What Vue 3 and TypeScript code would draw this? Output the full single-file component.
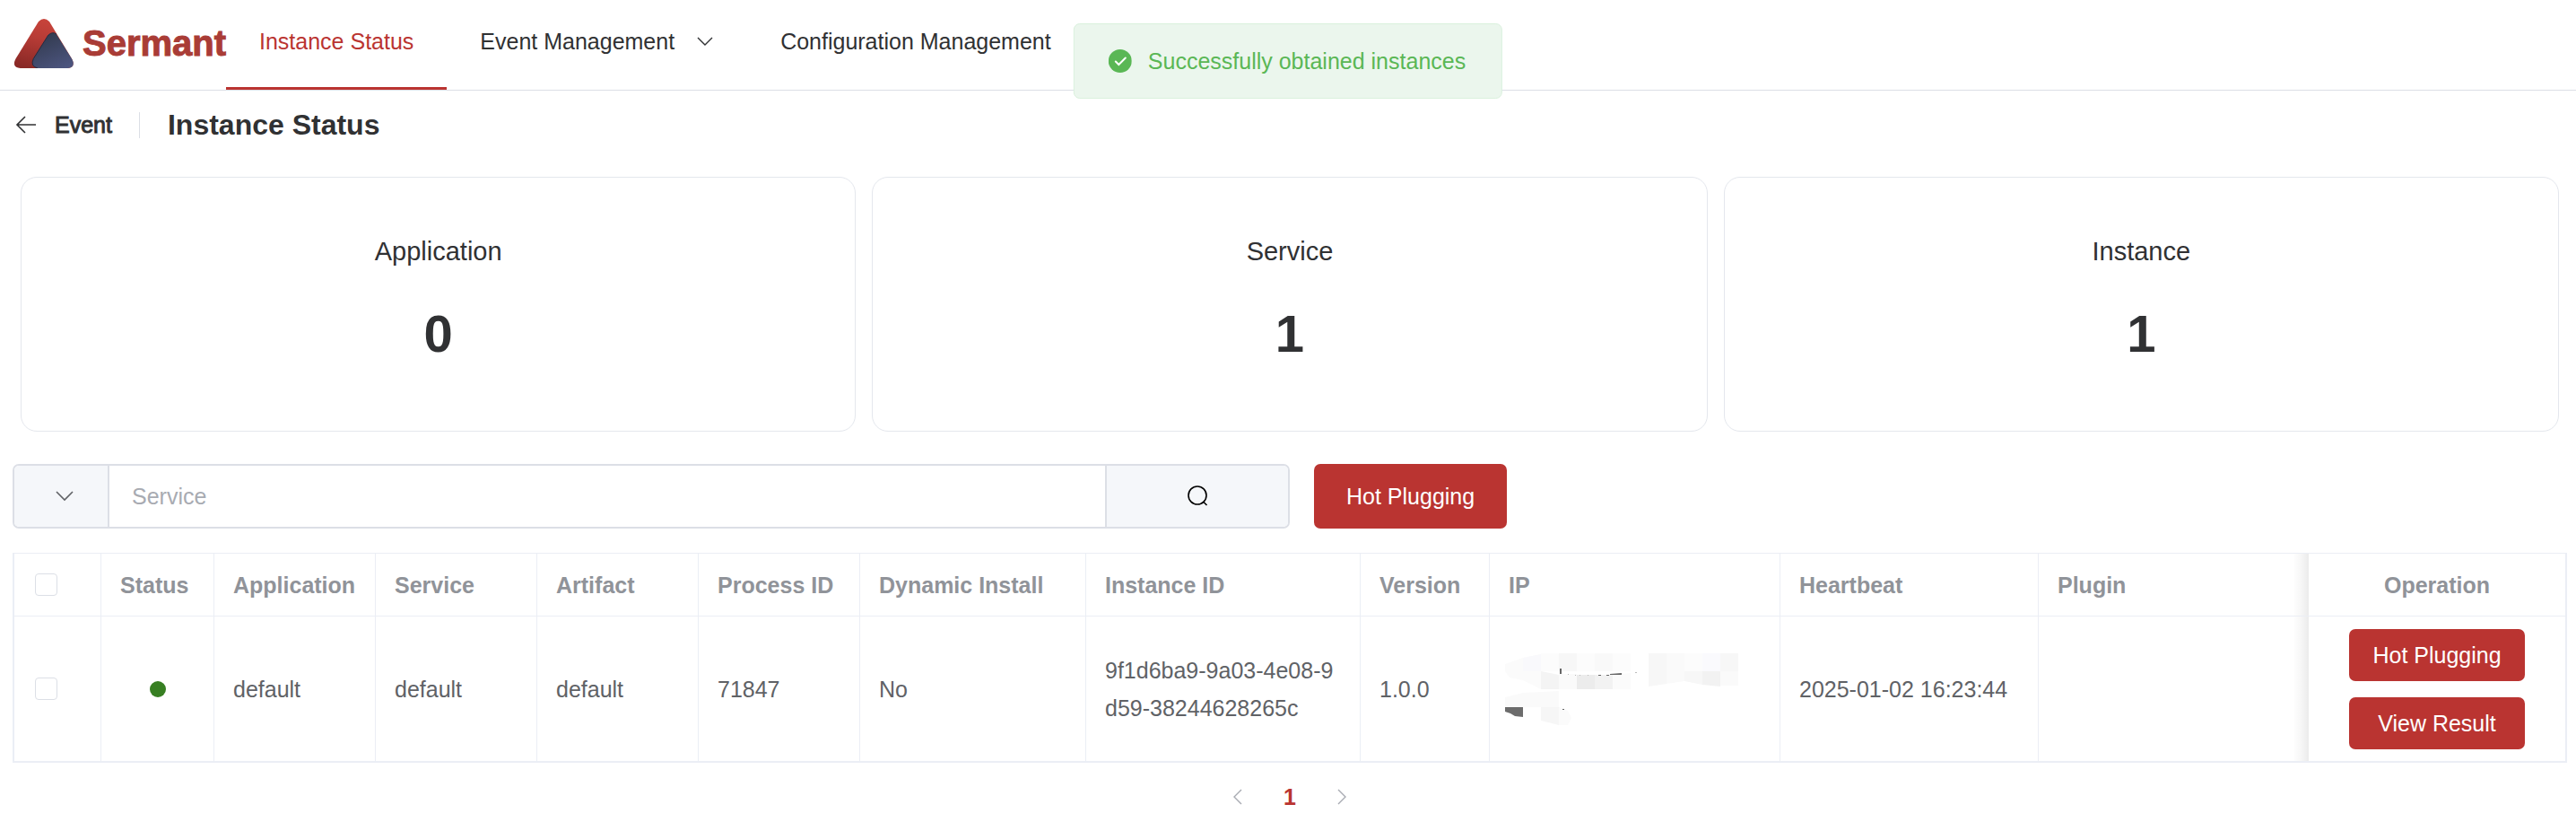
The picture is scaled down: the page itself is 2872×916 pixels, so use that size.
<script setup lang="ts">
import { ref } from 'vue'

interface Column {
  key: string
  label: string
  width?: number
}

interface Instance {
  application: string
  service: string
  artifact: string
  processId: string
  dynamicInstall: string
  instanceId: string
  version: string
  heartbeat: string
  plugin: string
}

const stats = [
  { label: 'Application', value: 0 },
  { label: 'Service', value: 1 },
  { label: 'Instance', value: 1 },
]

const columns: Column[] = [
  { key: 'status', label: 'Status', width: 126 },
  { key: 'application', label: 'Application', width: 180 },
  { key: 'service', label: 'Service', width: 180 },
  { key: 'artifact', label: 'Artifact', width: 180 },
  { key: 'process', label: 'Process ID', width: 180 },
  { key: 'dynamic', label: 'Dynamic Install', width: 252 },
  { key: 'instance', label: 'Instance ID', width: 306 },
  { key: 'version', label: 'Version', width: 144 },
  { key: 'ip', label: 'IP', width: 324 },
  { key: 'heartbeat', label: 'Heartbeat', width: 288 },
  { key: 'plugin', label: 'Plugin' },
  { key: 'operation', label: 'Operation', width: 286 },
]

const rows: Instance[] = [
  {
    application: 'default',
    service: 'default',
    artifact: 'default',
    processId: '71847',
    dynamicInstall: 'No',
    instanceId: '9f1d6ba9-9a03-4e08-9d59-38244628265c',
    version: '1.0.0',
    heartbeat: '2025-01-02 16:23:44',
    plugin: '',
  },
]

const keyword = ref('')
</script>

<template>
  <div class="page">
    <header class="navbar">
      <a class="logo" href="#">
        <svg class="logo-mark" viewBox="48 60 198 165" aria-hidden="true">
          <defs>
            <linearGradient id="mark-red" x1="0.6" y1="0" x2="0.3" y2="1">
              <stop offset="0" stop-color="#c9443b" />
              <stop offset="0.4" stop-color="#b83c36" />
              <stop offset="1" stop-color="#8a2926" />
            </linearGradient>
            <linearGradient id="mark-navy" x1="0.3" y1="0" x2="0.8" y2="1">
              <stop offset="0" stop-color="#323a4e" />
              <stop offset="1" stop-color="#4c557f" />
            </linearGradient>
          </defs>
          <path d="M129 69Q147 51 165 69L241 195Q254 222 226 225L68 225Q38 222 52 194Z" fill="url(#mark-red)" />
          <path d="M161 115Q175 101 189 112L241 195Q254 222 226 225L126 225Q100 218 112 193Z" fill="url(#mark-navy)" />
          <path d="M189 111Q175 101 161 115L112 193Q100 218 126 225" fill="none" stroke="#252b40" stroke-width="3" />
        </svg>
        <span class="logo-name">Sermant</span>
      </a>
      <nav class="menu">
        <a class="menu-item active" href="#">Instance Status</a>
        <button class="menu-item" type="button">
          Event Management
          <svg class="menu-arrow" viewBox="0 0 20 20" aria-hidden="true">
            <path d="M2 6L10 14L18 6" fill="none" stroke="#303133" stroke-width="1.4" />
          </svg>
        </button>
        <a class="menu-item" href="#">Configuration Management</a>
      </nav>
    </header>

    <div class="message" role="status">
      <svg class="message-icon" viewBox="0 0 26 26" aria-hidden="true">
        <circle cx="13" cy="13" r="13" fill="#5ab755" />
        <path d="M8 13.500L11.500 17L19 9.500" fill="none" stroke="#fff" stroke-width="2" stroke-linecap="round" />
      </svg>
      <span>Successfully obtained instances</span>
    </div>

    <main class="main">
      <div class="page-header">
        <button class="back" type="button">
          <svg class="back-icon" viewBox="0 0 24 24" aria-hidden="true">
            <path d="M23 12H2M11 3L2 12L11 21" fill="none" stroke="#303133" stroke-width="1.600" />
          </svg>
          Event
        </button>
        <h1 class="title">Instance Status</h1>
      </div>

      <section class="cards">
        <article v-for="stat in stats" :key="stat.label" class="card">
          <span class="card-label">{{ stat.label }}</span>
          <strong class="card-value">{{ stat.value }}</strong>
        </article>
      </section>

      <div class="toolbar">
        <form class="search" @submit.prevent>
          <div class="search-type">
            <select class="type-select" aria-label="Search field">
              <option value=""></option>
            </select>
            <svg class="type-arrow" viewBox="0 0 20 20" aria-hidden="true">
              <path d="M1 5L10 14L19 5" fill="none" stroke="#606266" stroke-width="1.600" />
            </svg>
          </div>
          <input v-model="keyword" class="search-input" type="text" placeholder="Service" aria-label="Service" />
          <button class="search-button" type="submit" aria-label="Search">
            <svg class="search-icon" viewBox="0 0 24 24" aria-hidden="true">
              <circle cx="12" cy="11" r="10" fill="none" stroke="#000" stroke-width="1.600" />
              <path d="M18.500 18L22.500 22" fill="none" stroke="#000" stroke-width="1.600" />
            </svg>
          </button>
        </form>
        <button class="button large" type="button">Hot Plugging</button>
      </div>

      <table class="table">
        <colgroup>
          <col class="select-col" />
          <col v-for="column in columns" :key="column.key" :style="column.width ? { width: column.width + 'px' } : undefined" />
        </colgroup>
        <thead>
          <tr>
            <th class="select-cell"><input class="checkbox" type="checkbox" aria-label="Select all instances" /></th>
            <th v-for="column in columns" :key="column.key" :class="column.key">{{ column.label }}</th>
          </tr>
        </thead>
        <tbody>
          <tr v-for="row in rows" :key="row.instanceId">
            <td class="select-cell"><input class="checkbox" type="checkbox" aria-label="Select instance" /></td>
            <td><span class="dot" role="img" aria-label="Online"></span></td>
            <td>{{ row.application }}</td>
            <td>{{ row.service }}</td>
            <td>{{ row.artifact }}</td>
            <td>{{ row.processId }}</td>
            <td>{{ row.dynamicInstall }}</td>
            <td>{{ row.instanceId }}</td>
            <td>{{ row.version }}</td>
            <td class="ip-cell">
              <svg class="mosaic" viewBox="0 0 260 80" role="img" aria-label="Hidden address">
                <path d="M0 12L20 5L40 1V20H0Z" fill="#fbfbfb" />
                <path d="M20 5L40 1V20H20Z" fill="#f9f9fc" />
                <path d="M40 0H60V20H40Z" fill="#fcfcfc" />
                <path d="M60 0H80V20H60Z" fill="#f7f7f7" />
                <path d="M80 0H100V20H80ZM120 0H140V20H120Z" fill="#fcfcfc" />
                <path d="M100 0H120V20H100Z" fill="#f9f9f9" />
                <path d="M0 20H40V40L20 30L5 27Z" fill="#fbfbfb" />
                <path d="M40 20L60 24V40H40Z" fill="#f4f4f4" />
                <path d="M60 23H80V40H60Z" fill="#fafafa" />
                <path d="M80 20H100V40H80Z" fill="#ececec" />
                <path d="M100 20H120V40H100Z" fill="#f2f2f2" />
                <path d="M120 20H140V40H120Z" fill="#fbfbfb" />
                <path d="M80 20H140V22L120 24H80Z" fill="#fff" />
                <path d="M160 0H180V34L160 37Z" fill="#f7f7f7" />
                <path d="M180 0H200V31L180 34Z" fill="#fafafa" />
                <path d="M200 0H220V20H200Z" fill="#fcfcfc" />
                <path d="M220 0H240V20H220Z" fill="#fafafd" />
                <path d="M240 0H260V20H240Z" fill="#f7f7f7" />
                <path d="M200 20H220V35L200 31Z" fill="#f7f7f7" />
                <path d="M220 20H240V37L220 35Z" fill="#f2f2f2" />
                <path d="M240 20H260V36H240Z" fill="#fafafa" />
                <path d="M0 49L20 44L60 42V60H0Z" fill="#fafafa" />
                <path d="M61 17H63V23H61Z" fill="#666" />
                <path d="M70 23H71V24H70ZM78 24H79V25H78ZM83 24H84V25H83ZM92 24H93V25H92Z" fill="#bbb" />
                <path d="M104 24H107V25H104ZM113 24H116V25H113ZM117 23L130 22V24L117 24Z" fill="#666" />
                <path d="M145 21H147V22H145Z" fill="#bbb" />
                <path d="M0 60H20V71L11 70L6 67L0 65Z" fill="#6c6c6c" />
                <path d="M40 60H60V80L40 75Z" fill="#f6f6f6" />
                <path d="M60 60L70 64L74 72L70 80H60Z" fill="#fbfbfb" />
                <path d="M64 62H66V63H64Z" fill="#666" />
              </svg>
            </td>
            <td>{{ row.heartbeat }}</td>
            <td class="plugin">{{ row.plugin }}</td>
            <td class="operation">
              <div class="actions">
                <button class="button" type="button">Hot Plugging</button>
                <button class="button" type="button">View Result</button>
              </div>
            </td>
          </tr>
        </tbody>
      </table>

      <nav class="pagination" aria-label="Pages">
        <button class="page-button" type="button" aria-label="Previous page">
          <svg class="page-arrow" viewBox="0 0 20 20" aria-hidden="true">
            <path d="M14 2L6 10L14 18" fill="none" stroke="#a8abb2" stroke-width="1.400" />
          </svg>
        </button>
        <button class="page-button current" type="button" aria-current="page">1</button>
        <button class="page-button" type="button" aria-label="Next page">
          <svg class="page-arrow" viewBox="0 0 20 20" aria-hidden="true">
            <path d="M6 2L14 10L6 18" fill="none" stroke="#a8abb2" stroke-width="1.400" />
          </svg>
        </button>
      </nav>
    </main>
  </div>
</template>

<style>
body {
  margin: 0;
  background: #fff;
}
</style>

<style scoped>
.page {
  position: relative;
  color: #303133;
  font-family: 'Liberation Sans', Arial, sans-serif;
  font-size: 25px;
  line-height: 42px;
}

.page * {
  box-sizing: border-box;
}

button,
input,
select {
  margin: 0;
  padding: 0;
  border: 0;
  background: none;
  color: inherit;
  font: inherit;
}

button {
  cursor: pointer;
}

a {
  color: inherit;
  text-decoration: none;
}

svg {
  display: block;
  flex: none;
}

.navbar {
  display: flex;
  border-bottom: 1px solid #dcdfe6;
}

.logo {
  display: flex;
  align-items: center;
  gap: 10px;
  width: 252px;
  height: 96px;
  padding-left: 16px;
}

.logo-mark {
  width: 66px;
  height: 55px;
}

.logo-name {
  color: #a93c36;
  font-size: 40px;
  font-weight: 700;
  -webkit-text-stroke: 1px #a93c36;
}

.menu {
  display: flex;
}

.menu-item {
  display: flex;
  align-items: center;
  gap: 24px;
  height: 100px;
  padding: 0 37px 5px;
  border-bottom: 3px solid transparent;
  white-space: nowrap;
}

.menu-item.active {
  border-bottom-color: #ba3431;
  color: #ba3431;
}

.menu-arrow {
  width: 20px;
  height: 20px;
}

.message {
  position: absolute;
  top: 26px;
  left: 50%;
  display: flex;
  align-items: center;
  gap: 18px;
  height: 84px;
  padding: 0 40px 0 38px;
  border: 1px solid #daf1dd;
  border-radius: 7px;
  background: #ebf6ed;
  color: #5ab755;
  white-space: nowrap;
  transform: translateX(-50%);
}

.message-icon {
  width: 26px;
  height: 26px;
}

.main {
  padding: 0 10px 0 14px;
}

.page-header {
  display: flex;
  align-items: center;
  height: 76px;
}

.back {
  display: flex;
  align-items: center;
  gap: 20px;
  height: 29px;
  padding: 0 30px 0 3px;
  border-right: 1px solid #dcdfe6;
  -webkit-text-stroke: 1px #303133;
}

.back-icon {
  width: 24px;
  height: 24px;
}

.title {
  margin: 0;
  padding-left: 31px;
  font-size: 32px;
  font-weight: 700;
}

.cards {
  display: grid;
  grid-template-columns: repeat(3, 1fr);
  gap: 18px;
  padding: 20px 9px 36px;
}

.card {
  display: flex;
  flex-direction: column;
  align-items: center;
  gap: 32px;
  padding: 62px 20px 68px;
  border: 1px solid #e4e7ed;
  border-radius: 18px;
}

.card-label {
  font-size: 29px;
  line-height: 40px;
}

.card-value {
  font-size: 58px;
  line-height: 80px;
}

.toolbar {
  display: flex;
  gap: 27px;
  margin-bottom: 27px;
}

.search {
  display: flex;
  width: 50%;
  height: 72px;
  overflow: hidden;
  border: 2px solid #dcdfe6;
  border-radius: 7px;
}

.search-type {
  display: grid;
  flex: none;
  align-items: center;
  justify-items: center;
  width: 106px;
  padding-left: 8px;
  border-right: 2px solid #dcdfe6;
  background: #f5f7fa;
}

.type-select {
  grid-area: 1 / 1;
  width: 100%;
  height: 100%;
  appearance: none;
}

.type-arrow {
  grid-area: 1 / 1;
  width: 20px;
  height: 20px;
  pointer-events: none;
}

.search-input {
  flex: 1;
  min-width: 0;
  padding: 0 25px;
}

.search-input::placeholder {
  color: #a8abb2;
  opacity: 1;
}

.search-button {
  display: flex;
  flex: none;
  align-items: center;
  justify-content: center;
  width: 204px;
  border-left: 2px solid #dcdfe6;
  background: #f5f7fa;
}

.search-icon {
  width: 24px;
  height: 24px;
}

.button {
  height: 58px;
  padding: 0 26px;
  border-radius: 7px;
  background: #ba3431;
  color: #fff;
  white-space: nowrap;
}

.button.large {
  height: 72px;
  padding: 0 36px;
}

.table {
  width: 100%;
  border: 2px solid #ebeef5;
  border-top-width: 1px;
  border-spacing: 0;
  table-layout: fixed;
}

.select-col {
  width: 97px;
}

th,
td {
  padding: 0 21px;
  border-right: 1px solid #ebeef5;
  text-align: left;
  vertical-align: middle;
}

th {
  height: 70px;
  border-bottom: 1px solid #ebeef5;
  color: #909399;
  font-weight: 700;
  white-space: nowrap;
}

td {
  height: 161px;
  color: #606266;
  word-break: break-all;
}

.select-cell {
  padding: 0 23px;
}

.plugin {
  border-right: 0;
  background: linear-gradient(to left, rgba(0, 0, 0, 0.08), rgba(0, 0, 0, 0.03) 9px, transparent 18px);
}

.operation {
  border-right: 0;
  text-align: center;
}

.ip-cell {
  padding: 0 17px;
}

.checkbox {
  display: block;
  width: 25px;
  height: 25px;
  border: 1px solid #dcdfe6;
  border-radius: 4px;
  background: #fff;
  appearance: none;
}

.checkbox:checked {
  background: #ba3431;
}

.dot {
  display: block;
  width: 18px;
  height: 18px;
  margin: 0 auto;
  border-radius: 50%;
  background: #377f22;
}

.mosaic {
  width: 260px;
  height: 80px;
}

.actions {
  display: inline-grid;
  gap: 18px;
  vertical-align: middle;
}

.pagination {
  display: flex;
  justify-content: center;
  padding-top: 10px;
}

.page-button {
  display: flex;
  align-items: center;
  justify-content: center;
  width: 58px;
  height: 56px;
}

.page-button.current {
  color: #ba3431;
  font-weight: 700;
}

.page-arrow {
  width: 20px;
  height: 20px;
}
</style>
